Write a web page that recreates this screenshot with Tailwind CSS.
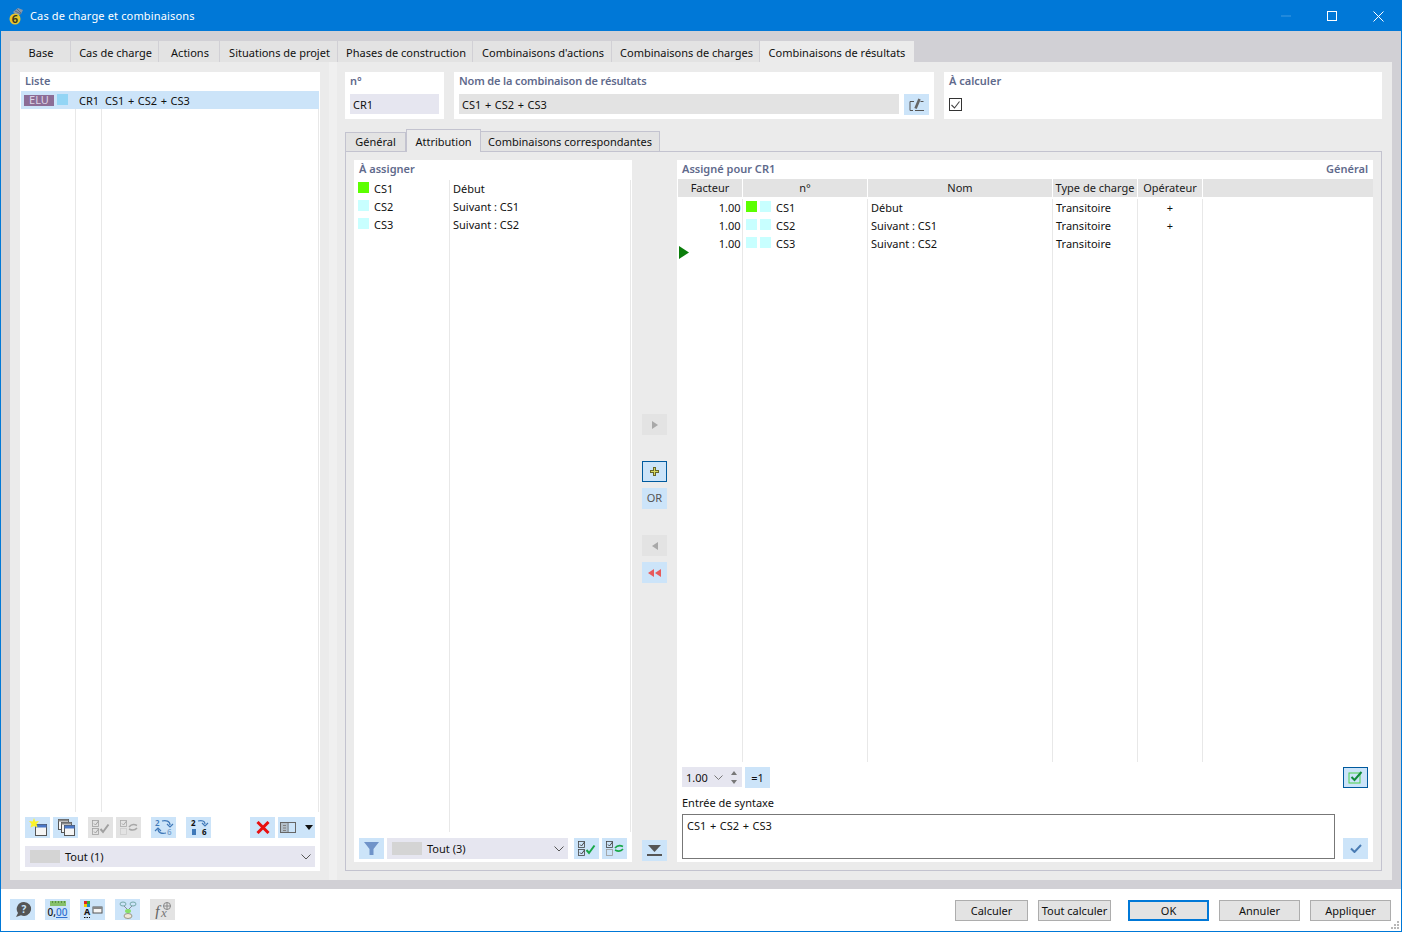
<!DOCTYPE html>
<html><head><meta charset="utf-8"><script src="https://cdn.jsdelivr.net/npm/@tailwindcss/browser@4"></script></head>
<body class="bg-white">
<div class="w-[1402px] h-[932px] flex flex-col overflow-hidden border border-[#0078d7] font-['Noto_Sans','Open_Sans',sans-serif] text-[11px] leading-[14px] text-[#111] bg-white relative">
  <!-- title -->
  <div class="h-[30px] shrink-0 bg-[#0078d7] flex items-center text-white">
    <svg class="ml-[8px] w-[15px] h-[17px]" viewBox="0 0 15 17"><path d="M4 4L9 0l5 2-2 4-4 2z" fill="#8a97a8"/><path d="M6 3l6 3M8 1l4 4" stroke="#4a5a70" stroke-width=".7"/><circle cx="6" cy="11" r="5.500" fill="#e8c62a"/><text x="6" y="15" font-size="11" font-weight="700" text-anchor="middle" fill="#3a3a20">6</text></svg>
    <span class="ml-[6px] text-[11px] tracking-[0.15px]">Cas de charge et combinaisons</span>
    <div class="ml-auto flex items-center">
      <svg class="w-[10px] h-[10px] mr-[36px]" viewBox="0 0 10 10"><path d="M0 5h10" stroke="#ffffff" stroke-opacity=".25"/></svg>
      <svg class="w-[10px] h-[10px] mr-[36px]" viewBox="0 0 10 10"><rect x=".5" y=".5" width="9" height="9" fill="none" stroke="#fff"/></svg>
      <svg class="w-[11px] h-[11px] mr-[17px]" viewBox="0 0 11 11"><path d="M.5.5l10 10M10.500.5l-10 10" stroke="#fff" fill="none"/></svg>
    </div>
  </div>
  <!-- body band -->
  <div class="flex-1 bg-[#d1d0d5] pt-[10px] px-[9px] pb-[9px] flex flex-col min-h-0 w-[1400px]">
    <div class="flex h-[21px] shrink-0 text-[11px]">
      <div class="w-[61px] pl-[2px] pt-[2px] bg-[#e3e3e3] border-r border-[#d1d0d5] flex items-center justify-center">Base</div>
      <div class="w-[88px] pl-[2px] pt-[2px] bg-[#e3e3e3] border-r border-[#d1d0d5] flex items-center justify-center">Cas de charge</div>
      <div class="w-[61px] pl-[2px] pt-[2px] bg-[#e3e3e3] border-r border-[#d1d0d5] flex items-center justify-center">Actions</div>
      <div class="w-[118px] pl-[2px] pt-[2px] bg-[#e3e3e3] border-r border-[#d1d0d5] flex items-center justify-center">Situations de projet</div>
      <div class="w-[135px] pl-[2px] pt-[2px] bg-[#e3e3e3] border-r border-[#d1d0d5] flex items-center justify-center">Phases de construction</div>
      <div class="w-[139px] pl-[2px] pt-[2px] bg-[#e3e3e3] border-r border-[#d1d0d5] flex items-center justify-center">Combinaisons d'actions</div>
      <div class="w-[148px] pl-[2px] pt-[2px] bg-[#e3e3e3] border-r border-[#d1d0d5] flex items-center justify-center">Combinaisons de charges</div>
      <div class="w-[154px] pt-[2px] bg-[#ebebeb] flex items-center justify-center">Combinaisons de résultats</div>
    </div>
    <div class="flex-1 bg-[#ebebeb] flex min-h-0 pt-[10px] pb-[9px] pl-[10px]">
      <!-- left -->
      <div class="w-[300px] bg-white flex flex-col shrink-0">
        <div class="h-[19px] shrink-0 pl-[5px] pt-[2px] font-semibold text-[#5f6a8c]">Liste</div>
        <div class="ml-[1px] w-[298px] h-[18px] bg-[#cce4f9] flex items-center shrink-0">
          <span class="ml-[3px] w-[30px] h-[11px] bg-[#8c6d96] text-[#dcd4e6] flex items-center justify-center">ELU</span>
          <span class="ml-[3px] w-[11px] h-[11px] bg-[#93d5f5] mb-[2px]"></span>
          <span class="ml-[11px] w-[26px] pt-[2px]">CR1</span><span class="pt-[2px] [word-spacing:0.75px]">CS1 + CS2 + CS3</span>
        </div>
        <div class="flex-1 flex ml-[1px] w-[298px] min-h-0">
          <div class="w-[55px] border-r border-[#e8e8e8]"></div>
          <div class="w-[26px] border-r border-[#e8e8e8]"></div>
          <div class="flex-1 border-r border-[#e8e8e8]"></div>
        </div>
        <div class="h-[26px] shrink-0 flex pl-[5px] pt-[5px]">
          <div class="w-[25px] h-[21px] bg-[#cce4f9] flex items-center justify-center">
            <svg class="w-[20px] h-[19px]" viewBox="0 0 20 19"><rect x="7.500" y="6.500" width="11" height="11" fill="#f5f5f5" stroke="#555"/><rect x="7.500" y="6.500" width="11" height="3" fill="#4a78c8"/><path d="M6 0l1.300 3.500L11 3 8.500 6l1 3.500L6 8 2.500 9.500l1-3.500L1 3l3.700.5z" fill="#fbf22a"/></svg>
          </div>
          <div class="ml-[3px] w-[25px] h-[21px] bg-[#cce4f9] flex items-center justify-center">
            <svg class="w-[20px] h-[19px]" viewBox="0 0 20 19"><rect x="2.500" y="1.500" width="10" height="10" fill="#f5f5f5" stroke="#555"/><rect x="2.500" y="1.500" width="10" height="2" fill="#888"/><rect x="5.500" y="4.500" width="10" height="10" fill="#f5f5f5" stroke="#555"/><rect x="5.500" y="4.500" width="10" height="2" fill="#888"/><rect x="8.500" y="7.500" width="10" height="10" fill="#f5f5f5" stroke="#555"/><rect x="8.500" y="7.500" width="10" height="3" fill="#4a78c8"/></svg>
          </div>
          <div class="ml-[10px] w-[25px] h-[21px] bg-[#e3e3e3] flex items-center justify-center">
            <svg class="w-[20px] h-[17px]" viewBox="0 0 20 17"><g fill="none" stroke="#a0a0a0"><rect x="1.500" y="1.500" width="6" height="6" stroke-width=".8"/><rect x="1.500" y="9.500" width="6" height="6" stroke-width=".8"/><path d="M3 4.500L4.500 6l3-4M3 12.500L4.500 14l3-4"/><path d="M9.500 10l2.500 3 5.500-7.500" stroke-width="2"/></g></svg>
          </div>
          <div class="ml-[3px] w-[25px] h-[21px] bg-[#e3e3e3] flex items-center justify-center">
            <svg class="w-[20px] h-[17px]" viewBox="0 0 20 17"><g fill="none" stroke="#a8a8a8"><rect x="1.500" y="1.500" width="6" height="6" stroke-width=".8"/><rect x="1.500" y="9.500" width="6" height="6" stroke="#ccc" stroke-width=".8"/><path d="M3 4.500L4.500 6l3-4"/><path d="M10 8c2-2.500 5-3 8-1.500M18 9c-2 2.500-5 2.500-8 1" stroke-width="1.500"/></g></svg>
          </div>
          <div class="ml-[10px] w-[25px] h-[21px] bg-[#cce4f9] flex items-center justify-center">
            <svg class="w-[22px] h-[19px]" viewBox="0 0 22 19"><text x="2" y="8" font-size="8" font-weight="600" fill="#3f78b8">2</text><text x="14" y="17" font-size="8" font-weight="600" fill="#7fa6cf">6</text><g fill="none" stroke="#3f78b8" stroke-width="1.200"><path d="M9 3c4-1 8 0 8 4"/><path d="M14 6l3 3 3-3"/><path d="M13 15c-4 1-8 0-8-4"/><path d="M2 13l3-3 3 3"/></g></svg>
          </div>
          <div class="ml-[10px] w-[25px] h-[21px] bg-[#cce4f9] flex items-center justify-center">
            <svg class="w-[22px] h-[19px]" viewBox="0 0 22 19"><text x="3" y="8" font-size="8" font-weight="700" fill="#111">2</text><text x="14" y="17" font-size="8" font-weight="700" fill="#111">6</text><rect x="4" y="11" width="4" height="6" fill="#3f78b8"/><g fill="none" stroke="#3f78b8" stroke-width="1.200"><path d="M10 3c4-1 7 0 7 3"/><path d="M14 5l3 3 3-3"/></g></svg>
          </div>
          <div class="ml-[39px] w-[25px] h-[21px] bg-[#cce4f9] flex items-center justify-center">
            <svg class="w-[14px] h-[13px]" viewBox="0 0 14 13"><path d="M1.500 1l11 11M12.500 1l-11 11" stroke="#e81010" stroke-width="3"/></svg>
          </div>
          <div class="ml-[3px] w-[37px] h-[21px] bg-[#cce4f9] flex items-center">
            <svg class="ml-[2px] w-[16px] h-[11px]" viewBox="0 0 16 11"><rect x=".5" y=".5" width="15" height="10" fill="none" stroke="#666"/><path d="M8 .5v10M3 3.500h3M3 6h3M3 8.500h3" stroke="#666"/><rect x="1" y="1" width="6" height="9" fill="#999" fill-opacity=".5"/></svg>
            <svg class="ml-[9px] w-[8px] h-[5px]" viewBox="0 0 8 5"><path d="M0 0h8L4 5z" fill="#111"/></svg>
          </div>
        </div>
        <div class="h-[29px] shrink-0 pl-[5px] pt-[8px] pb-0">
          <div class="w-[290px] h-[21px] bg-[#e6e6f0] flex items-center">
            <span class="ml-[5px] w-[30px] h-[13px] bg-[#d4d4d4]"></span><span class="ml-[5px]">Tout (1)</span>
            <svg class="ml-auto mr-[4px] w-[10px] h-[6px]" viewBox="0 0 10 6"><path d="M.5.5L5 5 9.500.5" fill="none" stroke="#555"/></svg>
          </div>
        </div>
        <div class="h-[4px] shrink-0"></div>
      </div>
      <!-- sash -->
      <div class="w-[9px] shrink-0"></div>
      <div class="w-[8px] shrink-0 bg-[#f0f0f0] -mt-[10px] -mb-[9px]"></div>
      <div class="w-[8px] shrink-0"></div>
      <!-- right -->
      <div class="flex-1 flex flex-col min-w-0 pr-[10px]">
        <div class="flex h-[47px] shrink-0 gap-[10px]">
          <div class="w-[99px] bg-white px-[5px] pt-[2px] flex flex-col">
            <span class="h-[20px] font-semibold text-[#5f6a8c]">n°</span>
            <div class="h-[20px] bg-[#e6e6f0] flex items-center pl-[3px] pt-[2px]">CR1</div>
          </div>
          <div class="w-[480px] bg-white px-[5px] pt-[2px] flex flex-col">
            <span class="h-[20px] font-semibold text-[#5f6a8c] tracking-[-0.15px]">Nom de la combinaison de résultats</span>
            <div class="flex gap-[5px]">
              <div class="w-[440px] h-[20px] bg-[#e3e3e3] flex items-center pl-[3px] pt-[2px] [word-spacing:0.75px]">CS1 + CS2 + CS3</div>
              <div class="w-[25px] h-[21px] bg-[#cce4f9] flex items-center justify-center">
                <svg class="w-[16px] h-[14px]" viewBox="0 0 16 14"><path d="M5 3.500H1v9h3M6 12.500h9M11.500 3.500h3" fill="none" stroke="#555"/><path d="M6.500 10.500L10.500 1" stroke="#666" stroke-width="2.600"/></svg>
              </div>
            </div>
          </div>
          <div class="flex-1 bg-white px-[5px] pt-[2px] flex flex-col">
            <span class="h-[20px] font-semibold text-[#5f6a8c]">À calculer</span>
            <div class="mt-[4px] w-[13px] h-[13px] border border-[#333] flex items-center justify-center">
              <svg class="w-[9px] h-[8px]" viewBox="0 0 9 8"><path d="M.5 4l3 3L8.500.5" fill="none" stroke="#444" stroke-width="1.100"/></svg>
            </div>
          </div>
        </div>
        <div class="h-[10px] shrink-0"></div>
        <div class="flex h-[23px] shrink-0 items-end relative z-10 -mb-px">
          <div class="w-[61px] h-[20px] bg-[#e3e3e3] border border-[#c3c3cf] flex items-center justify-center">Général</div>
          <div class="w-[75px] h-[23px] pt-[2px] bg-[#ebebeb] border border-b-0 border-[#c3c3cf] flex items-center justify-center">Attribution</div>
          <div class="w-[179px] h-[21px] bg-[#e3e3e3] border border-l-0 border-[#c3c3cf] flex items-center justify-center">Combinaisons correspondantes</div>
        </div>
        <div class="flex-1 border border-[#c3c3cf] flex min-h-0 pt-[8px] pb-[8px] pl-[8px] pr-[8px]">
          <!-- assign -->
          <div class="w-[278px] bg-white flex flex-col shrink-0">
            <div class="h-[20px] shrink-0 pl-[5px] pt-[2px] font-semibold text-[#5f6a8c]">À assigner</div>
            <div class="flex-1 relative flex min-h-0">
              <div class="w-[96px] border-r border-[#e8e8e8]">
                <div class="h-[18px] flex items-center pl-[4px]"><span class="w-[11px] h-[11px] bg-[#5cff00] mb-[3px]"></span><span class="ml-[5px]">CS1</span></div>
                <div class="h-[18px] flex items-center pl-[4px]"><span class="w-[11px] h-[11px] bg-[#c8ffff] mb-[3px]"></span><span class="ml-[5px]">CS2</span></div>
                <div class="h-[18px] flex items-center pl-[4px]"><span class="w-[11px] h-[11px] bg-[#c8ffff] mb-[3px]"></span><span class="ml-[5px]">CS3</span></div>
              </div>
              <div class="flex-1 border-r border-[#e8e8e8] pl-[3px] mr-[1px]">
                <div class="h-[18px] flex items-center">Début</div>
                <div class="h-[18px] flex items-center">Suivant : CS1</div>
                <div class="h-[18px] flex items-center">Suivant : CS2</div>
              </div>
            </div>
            <div class="h-[30px] shrink-0 flex pl-[5px] pt-[6px]">
              <div class="w-[25px] h-[21px] bg-[#cce4f9] flex items-center justify-center">
                <svg class="w-[15px] h-[13px]" viewBox="0 0 15 13"><path d="M0 0h15L9.500 7v6h-4V7z" fill="#6f93c9"/></svg>
              </div>
              <div class="ml-[3px] w-[181px] h-[21px] bg-[#e6e6f0] flex items-center">
                <span class="ml-[5px] w-[30px] h-[13px] bg-[#d4d4d4]"></span><span class="ml-[5px]">Tout (3)</span>
                <svg class="ml-auto mr-[4px] w-[10px] h-[6px]" viewBox="0 0 10 6"><path d="M.5.5L5 5 9.500.5" fill="none" stroke="#555"/></svg>
              </div>
              <div class="ml-[6px] w-[25px] h-[21px] bg-[#cce4f9] flex items-center justify-center">
                <svg class="w-[20px] h-[17px]" viewBox="0 0 20 17"><g fill="none" stroke="#444"><rect x="1.500" y="1.500" width="6" height="6" stroke-width=".8"/><rect x="1.500" y="9.500" width="6" height="6" stroke-width=".8"/><path d="M3 4.500L4.500 6l3-4M3 12.500L4.500 14l3-4"/></g><path d="M9.500 10l2.500 3 5.500-7.500" fill="none" stroke="#18a848" stroke-width="2"/></svg>
              </div>
              <div class="ml-[3px] w-[25px] h-[21px] bg-[#cce4f9] flex items-center justify-center">
                <svg class="w-[20px] h-[17px]" viewBox="0 0 20 17"><g fill="none" stroke="#444"><rect x="1.500" y="1.500" width="6" height="6" stroke-width=".8"/><path d="M3 4.500L4.500 6l3-4"/><rect x="1.500" y="9.500" width="6" height="6" stroke="#999" stroke-width=".8"/></g><path d="M10 8c2-2.500 5-3 8-1.500M18 9c-2 2.500-5 2.500-8 1" fill="none" stroke="#18a848" stroke-width="1.600"/></svg>
              </div>
            </div>
          </div>
          <!-- middle -->
          <div class="w-[45px] shrink-0 flex flex-col items-center relative">
            <div class="h-[254px] shrink-0"></div>
            <div class="w-[25px] h-[21px] bg-[#e3e3e3] flex items-center justify-center"><svg class="w-[6px] h-[8px]" viewBox="0 0 6 8"><path d="M0 0l6 4-6 4z" fill="#a8a8a8"/></svg></div>
            <div class="h-[26px] shrink-0"></div>
            <div class="w-[25px] h-[21px] bg-[#cce4f9] border border-[#005a9e] flex items-center justify-center"><svg class="w-[9px] h-[9px]" viewBox="0 0 9 9"><path d="M4.500 0v9M0 4.500h9" stroke="#66662a" stroke-width="3"/><path d="M4.500 1v7M1 4.500h7" stroke="#d8d860" stroke-width="1"/></svg></div>
            <div class="h-[6px] shrink-0"></div>
            <div class="w-[25px] h-[21px] bg-[#cce4f9] flex items-center justify-center text-[#555] pb-[1px]">OR</div>
            <div class="h-[26px] shrink-0"></div>
            <div class="w-[25px] h-[21px] bg-[#e3e3e3] flex items-center justify-center"><svg class="w-[6px] h-[8px]" viewBox="0 0 6 8"><path d="M6 0L0 4l6 4z" fill="#a8a8a8"/></svg></div>
            <div class="h-[6px] shrink-0"></div>
            <div class="w-[25px] h-[21px] bg-[#cce4f9] flex items-center justify-center"><svg class="w-[13px] h-[8px]" viewBox="0 0 13 8"><path d="M6 0L0 4l6 4zM13 0L7 4l6 4z" fill="#e85a5a"/></svg></div>
            <div class="flex-1"></div>
            <div class="w-[25px] h-[21px] bg-[#cce4f9] flex items-center justify-center"><svg class="w-[15px] h-[11px]" viewBox="0 0 15 11"><path d="M1 0h13L7.500 7z" fill="#555"/><path d="M0 9h15v2H0z" fill="#555"/></svg></div>
            <div class="h-[1px] shrink-0"></div>
          </div>
          <!-- assigned -->
          <div class="flex-1 bg-white flex flex-col min-w-0 relative">
            <div class="h-[19px] shrink-0 px-[5px] pt-[2px] flex justify-between font-semibold text-[#5f6a8c]"><span>Assigné pour CR1</span><span>Général</span></div>
            <div class="h-[18px] shrink-0 flex bg-[#e3e3e3] ml-[1px] text-[#1a1a1a]">
              <div class="w-[65px] border-r border-white flex items-center justify-center">Facteur</div>
              <div class="w-[125px] border-r border-white flex items-center justify-center">n°</div>
              <div class="w-[185px] border-r border-white flex items-center justify-center">Nom</div>
              <div class="w-[85px] border-r border-white flex items-center justify-center">Type de charge</div>
              <div class="w-[65px] border-r border-white flex items-center justify-center">Opérateur</div>
            </div>
            <div class="flex-1 flex ml-[1px] min-h-0 pt-[2px] relative">
              <div class="w-[65px] border-r border-[#e8e8e8] text-right pr-[1.5px]">
                <div class="h-[18px] leading-[18px]">1.00</div><div class="h-[18px] leading-[18px]">1.00</div><div class="h-[18px] leading-[18px]">1.00</div>
              </div>
              <div class="w-[125px] border-r border-[#e8e8e8]">
                <div class="h-[18px] flex items-center pl-[3px]"><span class="w-[11px] h-[11px] bg-[#5cff00] mb-[3px]"></span><span class="ml-[3px] w-[11px] h-[11px] bg-[#c8ffff] mb-[3px]"></span><span class="ml-[5px]">CS1</span></div>
                <div class="h-[18px] flex items-center pl-[3px]"><span class="w-[11px] h-[11px] bg-[#c8ffff] mb-[3px]"></span><span class="ml-[3px] w-[11px] h-[11px] bg-[#c8ffff] mb-[3px]"></span><span class="ml-[5px]">CS2</span></div>
                <div class="h-[18px] flex items-center pl-[3px]"><span class="w-[11px] h-[11px] bg-[#c8ffff] mb-[3px]"></span><span class="ml-[3px] w-[11px] h-[11px] bg-[#c8ffff] mb-[3px]"></span><span class="ml-[5px]">CS3</span></div>
              </div>
              <div class="w-[185px] border-r border-[#e8e8e8] pl-[3px]">
                <div class="h-[18px] leading-[18px]">Début</div><div class="h-[18px] leading-[18px]">Suivant : CS1</div><div class="h-[18px] leading-[18px]">Suivant : CS2</div>
              </div>
              <div class="w-[85px] border-r border-[#e8e8e8] pl-[3px]">
                <div class="h-[18px] leading-[18px]">Transitoire</div><div class="h-[18px] leading-[18px]">Transitoire</div><div class="h-[18px] leading-[18px]">Transitoire</div>
              </div>
              <div class="w-[65px] border-r border-[#e8e8e8] text-center">
                <div class="h-[18px] leading-[18px]">+</div><div class="h-[18px] leading-[18px]">+</div>
              </div>
              <svg class="absolute left-[1px] top-[49px] w-[10px] h-[13px]" viewBox="0 0 10 13"><path d="M0 0l10 6.500L0 13z" fill="#0a7d0a"/></svg>
            </div>
            <div class="h-[32px] shrink-0 flex items-start pt-[5px] pl-[5px] pr-[5px]">
              <div class="w-[60px] h-[20px] bg-[#e6e6f0] flex items-center pl-[4px]"><span class="pt-[2px]">1.00</span>
                <svg class="ml-[6px] w-[9px] h-[5px]" viewBox="0 0 9 5"><path d="M.5.5l4 4 4-4" fill="none" stroke="#777"/></svg>
                <svg class="ml-[8px] w-[6px] h-[13px]" viewBox="0 0 6 13"><path d="M3 0l3 4H0zM3 13l3-4H0z" fill="#777"/></svg>
              </div>
              <div class="ml-[3px] w-[25px] h-[21px] bg-[#cce4f9] flex items-center justify-center">=1</div>
              <div class="ml-auto w-[25px] h-[21px] bg-[#cce4f9] border border-[#005a9e] flex items-center justify-center">
                <svg class="w-[16px] h-[13px]" viewBox="0 0 16 13"><rect x="1" y="2" width="11" height="10" fill="none" stroke="#4cd04c"/><path d="M3.500 6l3 3 7-8" fill="none" stroke="#128a3c" stroke-width="2"/></svg>
              </div>
            </div>
            <div class="h-[20px] shrink-0 pl-[5px] pt-[2px]">Entrée de syntaxe</div>
            <div class="h-[45px] shrink-0 flex pl-[5px] pr-[5px]">
              <div class="w-[653px] h-[45px] border border-[#777] pl-[4px] pt-[4px] [word-spacing:0.75px]">CS1 + CS2 + CS3</div>
              <div class="ml-[8px] mt-[24px] w-[25px] h-[21px] bg-[#cce4f9] flex items-center justify-center">
                <svg class="w-[12px] h-[9px]" viewBox="0 0 12 9"><path d="M1 4.500l3.500 3.500L11 1" fill="none" stroke="#4a7cb4" stroke-width="2"/></svg>
              </div>
            </div>
            <div class="h-[3px] shrink-0"></div>
          </div>
        </div>
      </div>
    </div>
  </div>
  <!-- footer -->
  <div class="h-[42px] shrink-0 bg-white flex items-start pt-[10px] pl-[9px] relative">
    <div class="w-[25px] h-[21px] bg-[#cce4f9] flex items-center justify-center">
      <svg class="w-[18px] h-[17px]" viewBox="0 0 18 17"><path d="M10 1a7 7 0 1 1-3 13.300L2 16l2-4A7 7 0 0 1 10 1z" fill="#555"/><text x="10" y="12" font-size="10" font-weight="700" text-anchor="middle" fill="#cce4f9">?</text></svg>
    </div>
    <div class="ml-[10px] w-[25px] h-[21px] bg-[#cce4f9] flex flex-col items-center justify-center">
      <svg class="w-[16px] h-[5px]" viewBox="0 0 16 5"><rect width="16" height="5" fill="#86c06a"/><path d="M2.500 0v2M5.500 0v2M8.500 0v2M11.500 0v2M14.500 0v2" stroke="#5a9040"/></svg>
      <span class="text-[10px] leading-[12px] font-medium text-[#111]">0,<span class="text-[#2f6fd0] underline">00</span></span>
    </div>
    <div class="ml-[10px] w-[25px] h-[21px] bg-[#cce4f9] flex items-center justify-center">
      <svg class="w-[20px] h-[18px]" viewBox="0 0 20 18"><rect x="1" y="0" width="3" height="3" fill="#d22"/><rect x="4" y="0" width="3" height="3" fill="#3a3"/><rect x="1" y="3" width="3" height="3" fill="#ec0"/><rect x="4" y="3" width="3" height="3" fill="#28c"/><text x="4" y="14" font-size="9" font-weight="700" text-anchor="middle" fill="#111">A</text><path d="M1 16.500h6" stroke="#111" stroke-dasharray="1.500 1"/><rect x="10" y="6" width="9" height="6" fill="#f5f5f5" stroke="#555"/><rect x="10" y="6" width="9" height="2" fill="#888"/></svg>
    </div>
    <div class="ml-[10px] w-[25px] h-[21px] bg-[#cce4f9] flex items-center justify-center">
      <svg class="w-[18px] h-[18px]" viewBox="0 0 18 18"><ellipse cx="4" cy="3" rx="3" ry="2" fill="#cce4f9" stroke="#7aa"/><ellipse cx="14" cy="3" rx="3" ry="2" fill="#cce4f9" stroke="#7aa"/><path d="M5 5l4 4M13 5l-4 4M9 9v4" stroke="#889"/><ellipse cx="9" cy="10" rx="3" ry="2" fill="#86e06a"/><ellipse cx="9" cy="15" rx="4" ry="2.500" fill="#f0e8d8" stroke="#998"/></svg>
    </div>
    <div class="ml-[10px] w-[25px] h-[21px] bg-[#e3e3e3] flex items-center justify-center">
      <svg class="w-[20px] h-[18px]" viewBox="0 0 20 18"><text x="2" y="16" font-size="16" font-style="italic" font-family="Liberation Serif" fill="#666">f</text><text x="8" y="16" font-size="13" font-style="italic" font-family="Liberation Serif" fill="#777">x</text><circle cx="14" cy="5" r="3.500" fill="none" stroke="#888"/><path d="M10.500 5h7M14 1.500v7" stroke="#888"/></svg>
    </div>
    <div class="ml-auto flex items-start mt-[1px] pr-[10px]">
      <div class="w-[73px] h-[21px] pt-[1px] bg-[#e3e3e3] border border-[#adadad] flex items-center justify-center">Calculer</div>
      <div class="ml-[10px] w-[73px] h-[21px] pt-[1px] bg-[#e3e3e3] border border-[#adadad] flex items-center justify-center">Tout calculer</div>
      <div class="ml-[17px] w-[81px] h-[21px] pt-[1px] bg-[#e3e3e3] border-2 border-[#0078d7] flex items-center justify-center">OK</div>
      <div class="ml-[10px] w-[81px] h-[21px] pt-[1px] bg-[#e3e3e3] border border-[#adadad] flex items-center justify-center">Annuler</div>
      <div class="ml-[10px] w-[81px] h-[21px] pt-[1px] bg-[#e3e3e3] border border-[#adadad] flex items-center justify-center">Appliquer</div>
    </div>
    <svg class="absolute right-[1px] bottom-[1px] w-[10px] h-[10px]" viewBox="0 0 10 10"><path d="M7 1h2v2H7zM4 4h2v2H4zM7 4h2v2H7zM1 7h2v2H1zM4 7h2v2H4zM7 7h2v2H7z" fill="#b8b8b8"/></svg>
  </div>
</div>
</body></html>
